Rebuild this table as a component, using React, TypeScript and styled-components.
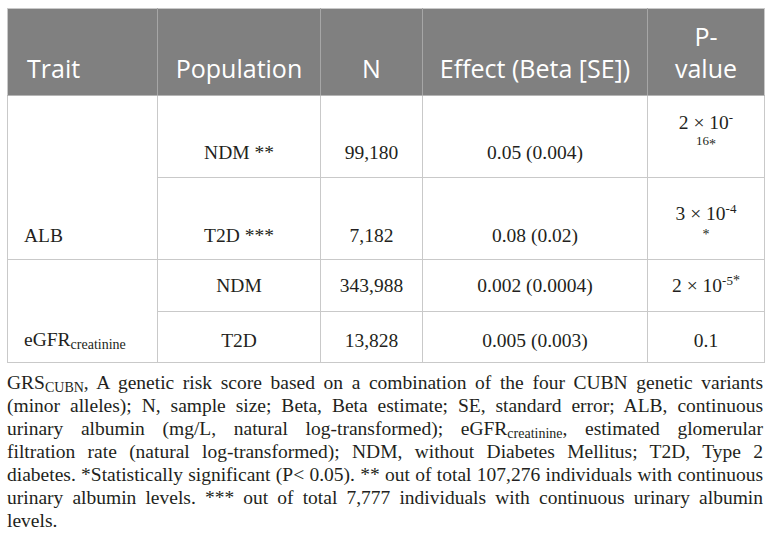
import React from "react";
import styled, { createGlobalStyle } from "styled-components";

const Global = createGlobalStyle`
  html, body { margin: 0; padding: 0; background: #ffffff; }
  body { width: 772px; height: 559px; overflow: hidden; }
`;

const Page = styled.div`
  padding: 8px 8px 0 7px;
  box-sizing: border-box;
  width: 772px;
`;

const Table = styled.table`
  width: 757px;
  border-collapse: collapse;
  table-layout: fixed;
  border: 1px solid #c9c9c9;
`;

const HeadRow = styled.tr`
  height: 87px;
  background: #808080;
`;

const Th = styled.th<{ $align?: "left" | "center" }>`
  font-family: "Open Sans", "Liberation Sans", sans-serif;
  font-weight: 400;
  font-size: 25px;
  line-height: 32px;
  color: #ffffff;
  text-align: ${(p) => p.$align ?? "center"};
  vertical-align: bottom;
  padding: 0 8px 11px ${(p) => (p.$align === "left" ? "19px" : "8px")};
  border-left: 1px solid #a6a6a6;
  border-bottom: 1px solid #b5b5b5;
  &:first-child { border-left: none; }
`;

const BodyRow = styled.tr<{ $h: number }>`
  height: ${(p) => p.$h}px;
`;

const Td = styled.td<{ $align?: "left" | "center"; $pb?: number }>`
  font-family: "Liberation Serif", "Times New Roman", serif;
  font-size: 19.5px;
  line-height: 23px;
  color: #231f20;
  text-align: ${(p) => p.$align ?? "center"};
  vertical-align: bottom;
  padding: 0 6px ${(p) => p.$pb ?? 13}px ${(p) => (p.$align === "left" ? "16px" : "6px")};
  border: 1px solid #c9c9c9;
`;

const Sup = styled.sup`
  font-size: 13px;
  line-height: 0;
  vertical-align: 7px;
`;

const Star = styled.span<{ $raise?: number }>`
  font-size: 14px;
  line-height: 0;
  position: relative;
  top: ${(p) => (p.$raise ? -p.$raise : 0)}px;
`;

const Sub = styled.sub`
  font-size: 14px;
  line-height: 0;
  vertical-align: -3px;
`;

const Caption = styled.div`
  margin: 8px 0 0 0;
  width: 756px;
  font-family: "Liberation Serif", "Times New Roman", serif;
  font-size: 19.5px;
  line-height: 23px;
  color: #231f20;
`;

const Line = styled.span<{ $last?: boolean }>`
  display: block;
  white-space: nowrap;
  text-align: ${(p) => (p.$last ? "left" : "justify")};
  text-align-last: ${(p) => (p.$last ? "left" : "justify")};
`;

const cols = [150, 163, 102, 225, 117];

export default function App() {
  return (
    <>
      <Global />
      <Page>
        <Table>
          <colgroup>
            {cols.map((w, i) => (
              <col key={i} style={{ width: w }} />
            ))}
          </colgroup>
          <thead>
            <HeadRow>
              <Th $align="left">Trait</Th>
              <Th>Population</Th>
              <Th>N</Th>
              <Th>Effect (Beta [SE])</Th>
              <Th>
                P-
                <br />
                value
              </Th>
            </HeadRow>
          </thead>
          <tbody>
            <BodyRow $h={82}>
              <Td $align="left" rowSpan={2} $pb={12}>
                ALB
              </Td>
              <Td>NDM **</Td>
              <Td>99,180</Td>
              <Td>0.05 (0.004)</Td>
              <Td $pb={20}>
                2 × 10<Sup>-</Sup>
                <br />
                <Sup>16</Sup>
                <Star $raise={3}>*</Star>
              </Td>
            </BodyRow>
            <BodyRow $h={82}>
              <Td $pb={12}>T2D ***</Td>
              <Td $pb={12}>7,182</Td>
              <Td $pb={12}>0.08 (0.02)</Td>
              <Td $pb={11}>
                3 × 10<Sup>-4</Sup>
                <br />
                <Star $raise={4}>*</Star>
              </Td>
            </BodyRow>
            <BodyRow $h={52}>
              <Td $align="left" rowSpan={2} $pb={11}>
                eGFR<Sub>creatinine</Sub>
              </Td>
              <Td $pb={14}>NDM</Td>
              <Td $pb={14}>343,988</Td>
              <Td $pb={14}>0.002 (0.0004)</Td>
              <Td $pb={14}>
                2 × 10<Sup>-5</Sup>
                <Star $raise={7}>*</Star>
              </Td>
            </BodyRow>
            <BodyRow $h={51}>
              <Td $pb={10}>T2D</Td>
              <Td $pb={10}>13,828</Td>
              <Td $pb={10}>0.005 (0.003)</Td>
              <Td $pb={10}>0.1</Td>
            </BodyRow>
          </tbody>
        </Table>
        <Caption>
          <Line>
            GRS<Sub>CUBN</Sub>, A genetic risk score based on a combination of the four CUBN genetic
            variants
          </Line>
          <Line>
            (minor alleles); N, sample size; Beta, Beta estimate; SE, standard error; ALB, continuous
          </Line>
          <Line>
            urinary albumin (mg/L, natural log-transformed); eGFR<Sub>creatinine</Sub>, estimated
            glomerular
          </Line>
          <Line>
            filtration rate (natural log-transformed); NDM, without Diabetes Mellitus; T2D, Type 2
          </Line>
          <Line>
            diabetes. *Statistically significant (P&lt; 0.05). ** out of total 107,276 individuals
            with continuous
          </Line>
          <Line>
            urinary albumin levels. *** out of total 7,777 individuals with continuous urinary
            albumin
          </Line>
          <Line $last>levels.</Line>
        </Caption>
      </Page>
    </>
  );
}
